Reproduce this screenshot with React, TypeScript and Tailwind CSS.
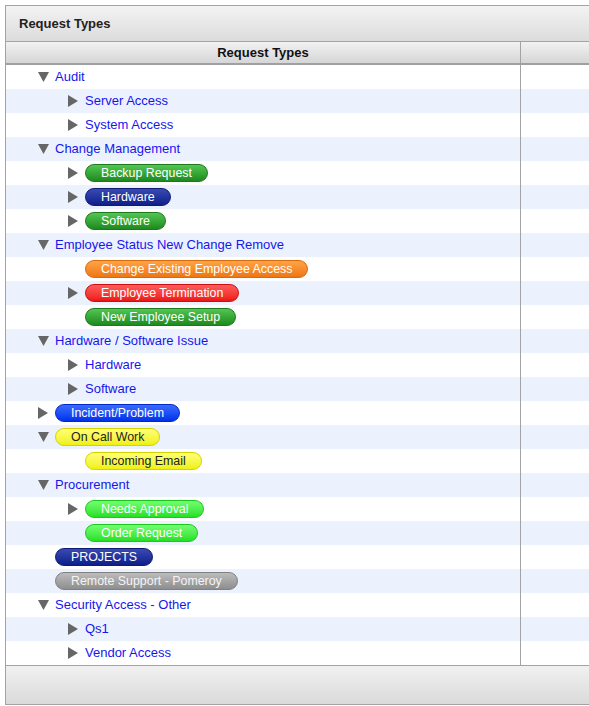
type Pill = 'green' | 'navy' | 'orange' | 'red' | 'blue' | 'yellow' | 'lime' | 'gray';

type Row = {
  label: string;
  level: number;
  toggle?: 'open' | 'closed';
  pill?: Pill;
};

const rows: Row[] = [
  { label: 'Audit', level: 0, toggle: 'open' },
  { label: 'Server Access', level: 1, toggle: 'closed' },
  { label: 'System Access', level: 1, toggle: 'closed' },
  { label: 'Change Management', level: 0, toggle: 'open' },
  { label: 'Backup Request', level: 1, toggle: 'closed', pill: 'green' },
  { label: 'Hardware', level: 1, toggle: 'closed', pill: 'navy' },
  { label: 'Software', level: 1, toggle: 'closed', pill: 'green' },
  { label: 'Employee Status New Change Remove', level: 0, toggle: 'open' },
  { label: 'Change Existing Employee Access', level: 1, pill: 'orange' },
  { label: 'Employee Termination', level: 1, toggle: 'closed', pill: 'red' },
  { label: 'New Employee Setup', level: 1, pill: 'green' },
  { label: 'Hardware / Software Issue', level: 0, toggle: 'open' },
  { label: 'Hardware', level: 1, toggle: 'closed' },
  { label: 'Software', level: 1, toggle: 'closed' },
  { label: 'Incident/Problem', level: 0, toggle: 'closed', pill: 'blue' },
  { label: 'On Call Work', level: 0, toggle: 'open', pill: 'yellow' },
  { label: 'Incoming Email', level: 1, pill: 'yellow' },
  { label: 'Procurement', level: 0, toggle: 'open' },
  { label: 'Needs Approval', level: 1, toggle: 'closed', pill: 'lime' },
  { label: 'Order Request', level: 1, pill: 'lime' },
  { label: 'PROJECTS', level: 0, pill: 'navy' },
  { label: 'Remote Support - Pomeroy', level: 0, pill: 'gray' },
  { label: 'Security Access - Other', level: 0, toggle: 'open' },
  { label: 'Qs1', level: 1, toggle: 'closed' },
  { label: 'Vendor Access', level: 1, toggle: 'closed' },
];

const pillClass: Record<Pill, string> = {
  green: 'bg-gradient-to-b from-[#52c652] to-[#1c8a1c] border-[#1b7a1b] text-white',
  navy: 'bg-gradient-to-b from-[#3a4ab4] to-[#101e8a] border-[#0e1a74] text-white',
  orange: 'bg-gradient-to-b from-[#ffa444] to-[#ee7612] border-[#d86a0e] text-white',
  red: 'bg-gradient-to-b from-[#ff5a5a] to-[#ec1414] border-[#cc1010] text-white',
  blue: 'bg-gradient-to-b from-[#3a6aff] to-[#0030ea] border-[#0028c8] text-white',
  yellow: 'bg-gradient-to-b from-[#ffff70] to-[#f0f000] border-[#d4d400] text-[#222]',
  lime: 'bg-gradient-to-b from-[#70ff70] to-[#22e022] border-[#1cc81c] text-white',
  gray: 'bg-gradient-to-b from-[#bcbcbc] to-[#8e8e8e] border-[#808080] text-[#f4f4f4]',
};

function Toggle({ state }: { state?: 'open' | 'closed' }) {
  if (!state) return <span className="w-[18px] shrink-0" />;
  return (
    <span className="w-[18px] shrink-0 flex items-center">
      {state === 'open' ? (
        <svg width="11" height="10" viewBox="0 0 11 10" className="ml-[1px]">
          <polygon points="0,0 11,0 5.5,10" fill="#666" />
        </svg>
      ) : (
        <svg width="10" height="12" viewBox="0 0 10 12" className="ml-[1px]">
          <polygon points="0,0 10,6 0,12" fill="#666" />
        </svg>
      )}
    </span>
  );
}

export default function App() {
  return (
    <div className="w-[589px] h-[706px] overflow-hidden bg-white pt-[5px] pl-[5px] font-['Liberation_Sans',Arial,sans-serif] text-[13px]">
      <div className="w-[620px] border border-[#a3a3a3] bg-white">
        <div className="h-[36px] flex items-center pl-[13px] bg-gradient-to-b from-[#f3f3f3] to-[#dcdcdc] border-b border-[#a3a3a3]">
          <span className="font-bold text-[#222]">Request Types</span>
        </div>

        <div className="flex h-[23px] bg-gradient-to-b from-[#f2f2f2] to-[#d6d6d6] border-b-2 border-[#a0a0a0]">
          <div className="w-[515px] border-r border-[#a3a3a3] flex items-center justify-center font-bold text-[#111]">
            Request Types
          </div>
          <div className="flex-1" />
        </div>

        {rows.map((row, i) => (
          <div key={i} className={`flex h-[24px] ${i % 2 === 1 ? 'bg-[#ebf2fd]' : 'bg-white'}`}>
            <div
              className="w-[515px] border-r border-[#a3a3a3] flex items-center"
              style={{ paddingLeft: 31 + row.level * 30 }}
            >
              <Toggle state={row.toggle} />
              {row.pill ? (
                <span
                  className={`h-[18px] flex items-center px-[15px] rounded-full border text-[12.4px] leading-none ${pillClass[row.pill]}`}
                >
                  {row.label}
                </span>
              ) : (
                <span className="text-[#1616ee]">{row.label}</span>
              )}
            </div>
            <div className="flex-1" />
          </div>
        ))}

        <div className="h-[39px] border-t border-[#a3a3a3] bg-gradient-to-b from-[#f1f1f1] to-[#dadada]" />
      </div>
    </div>
  );
}
